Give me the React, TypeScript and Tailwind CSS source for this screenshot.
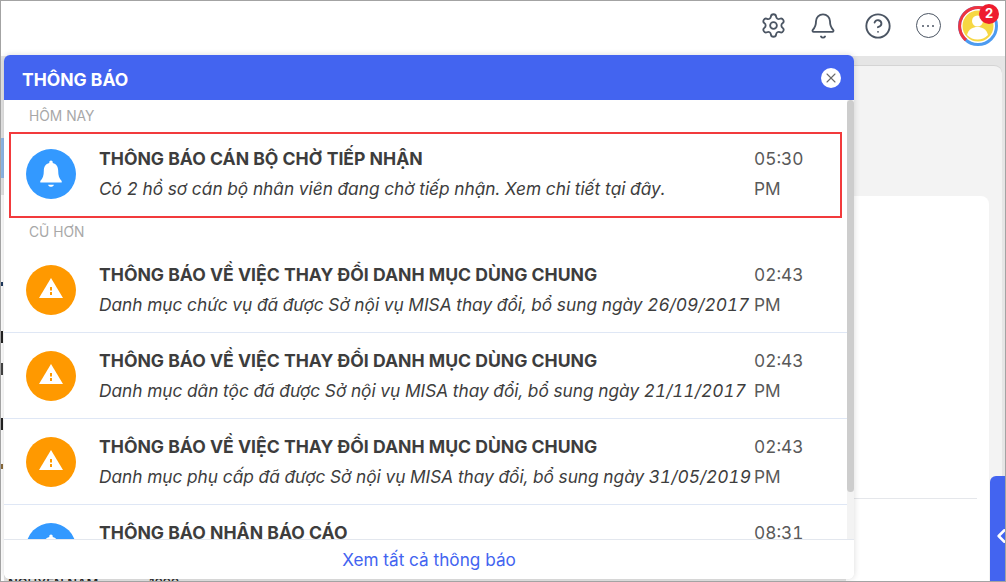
import { Settings, Bell, CircleHelp, X, ChevronLeft } from 'lucide-react';

type Item = { icon: 'bell' | 'warn'; title: string; body: string; time: string; period: string };

const oldItems: Item[] = [
  { icon: 'warn', title: 'THÔNG BÁO VỀ VIỆC THAY ĐỔI DANH MỤC DÙNG CHUNG', body: 'Danh mục chức vụ đã được Sở nội vụ MISA thay đổi, bổ sung ngày 26/09/2017', time: '02:43', period: 'PM' },
  { icon: 'warn', title: 'THÔNG BÁO VỀ VIỆC THAY ĐỔI DANH MỤC DÙNG CHUNG', body: 'Danh mục dân tộc đã được Sở nội vụ MISA thay đổi, bổ sung ngày 21/11/2017', time: '02:43', period: 'PM' },
  { icon: 'warn', title: 'THÔNG BÁO VỀ VIỆC THAY ĐỔI DANH MỤC DÙNG CHUNG', body: 'Danh mục phụ cấp đã được Sở nội vụ MISA thay đổi, bổ sung ngày 31/05/2019', time: '02:43', period: 'PM' },
  { icon: 'bell', title: 'THÔNG BÁO NHẬN BÁO CÁO', body: 'Bạn có báo cáo mới cần xem', time: '08:31', period: 'AM' },
];

function ItemIcon({ icon }: { icon: Item['icon'] }) {
  if (icon === 'bell') {
    return (
      <div className="flex h-[50px] w-[50px] shrink-0 items-center justify-center rounded-full bg-[#3399ff]">
        <svg width="26" height="30" viewBox="0 0 24 28" fill="white">
          <path d="M12 1.5c-.9 0-1.600.7-1.600 1.600v.6C6.900 4.500 5.300 7.300 5.300 10.800c0 4.700-.9 7.400-3.300 9.700v1.500h20v-1.500c-2.400-2.300-3.300-5-3.300-9.700 0-3.500-1.600-6.300-5.100-7.100v-.6c0-.9-.7-1.600-1.600-1.600z" />
          <path d="M9.300 24h5.400c-.3 1.200-1.400 2-2.700 2s-2.400-.8-2.700-2z" />
        </svg>
      </div>
    );
  }
  return (
    <div className="flex h-[50px] w-[50px] shrink-0 items-center justify-center rounded-full bg-[#ff9900] pb-[4px]">
      <svg width="24" height="20" viewBox="0 0 24 20">
        <path d="M12 0 24 20H0z" fill="white" />
        <rect x="11" y="9" width="2" height="3.500" fill="#ff9900" />
        <rect x="11" y="14" width="2" height="3" fill="#ff9900" />
      </svg>
    </div>
  );
}

function Row({ item, className, timeWidth }: { item: Item; className: string; timeWidth: string }) {
  return (
    <div className={`flex items-center ${className}`}>
      <ItemIcon icon={item.icon} />
      <div className="ml-[23px] min-w-0 flex-1">
        <div className="whitespace-nowrap text-[17.6px] font-bold leading-[30px] text-[#3d3d3d]">{item.title}</div>
        <div className="whitespace-nowrap text-[17.3px] italic leading-[30px] tabular-nums text-[#3d3d3d]">{item.body}</div>
      </div>
      <div className={`shrink-0 text-[17.3px] leading-[30px] tabular-nums text-[#595959] ${timeWidth}`}>
        <div>{item.time}</div>
        <div>{item.period}</div>
      </div>
    </div>
  );
}

export default function App() {
  return (
    <div className="relative h-[582px] w-[1006px] overflow-hidden border border-[#a3a3a3] bg-[#e5e5e5] font-['Inter',sans-serif]">
      {/* top bar */}
      <div className="flex h-[55px] items-center justify-end bg-white pb-[6px] pr-[2px] text-[#4b5563]">
        <div className="flex w-[50px] justify-center"><Settings size={27} strokeWidth={1.6} /></div>
        <div className="flex w-[50px] justify-center"><Bell size={28} strokeWidth={1.6} /></div>
        <div className="ml-[5px] flex w-[50px] justify-center"><CircleHelp size={28} strokeWidth={1.6} /></div>
        <div className="flex w-[50px] justify-center">
          <div className="flex h-[25px] w-[25px] items-center justify-center gap-[3px] rounded-full border-[1.6px] border-[#4b5563]">
            <span className="h-[2px] w-[2px] rounded-full bg-[#4b5563]" />
            <span className="h-[2px] w-[2px] rounded-full bg-[#4b5563]" />
            <span className="h-[2px] w-[2px] rounded-full bg-[#4b5563]" />
          </div>
        </div>
        <div className="flex w-[50px] justify-center">
          <div className="relative h-[40px] w-[40px]">
            <svg width="40" height="40" viewBox="0 0 40 40">
              <circle cx="20" cy="20" r="18.500" fill="none" stroke="#4d9bf0" strokeWidth="3" />
              <path d="M8 34A18.500 18.500 0 0 1 26 2.500" fill="none" stroke="#ef3340" strokeWidth="3" />
              <circle cx="20" cy="20" r="15.500" fill="#f6d743" />
              <circle cx="19.500" cy="15" r="5.500" fill="white" />
              <path d="M9 29c1.500-6 6-8 10.500-8s9 2 10.500 8c-3 3-6.500 4.500-10.500 4.500S12 32 9 29z" fill="white" />
            </svg>
            <span className="absolute -right-[1px] -top-[2px] flex h-[20px] w-[20px] items-center justify-center rounded-full bg-[#ee1c2e] text-[13px] font-bold text-white">2</span>
          </div>
        </div>
      </div>

      {/* page behind the panel */}
      <div className="flex h-[525px] pl-[845px] pr-[3px] pt-[9px]">
        <div className="h-full flex-1 rounded-t-[8px] border-t border-[#d4d4d4] bg-[#f3f3f3] pr-[13px] pt-[130px]">
          <div className="h-full rounded-tr-[8px] bg-white">
            <div className="mr-[12px] pt-[302px]">
              <div className="h-px bg-[#e5e7eb]" />
            </div>
          </div>
        </div>
      </div>
      <div className="absolute bottom-0 right-0 flex h-[105px] w-[15px] items-center justify-end rounded-tl-[6px] bg-[#4364f0] pt-[15px] text-white">
        <ChevronLeft size={26} strokeWidth={2.6} className="-mr-[8px]" />
      </div>

      {/* bits of the page showing round the panel */}
      <div className="absolute bottom-0 left-0 top-[194px] w-[3px] bg-white" />
      <div className="absolute left-0 top-[137px] h-[40px] w-[3px] bg-[#8fb8e8]" />
      <div className="absolute left-0 top-[281px] h-[4px] w-[2px] bg-[#1f3a5f]" />
      <div className="absolute left-0 top-[330px] h-[12px] w-[2px] bg-[#222222]" />
      <div className="absolute left-0 top-[362px] h-[12px] w-[2px] bg-[#444444]" />
      <div className="absolute left-0 top-[417px] h-[12px] w-[2px] bg-[#222222]" />
      <div className="absolute left-0 top-[463px] h-[5px] w-[2px] bg-[#8a6a3a]" />
      <div className="absolute left-[7px] top-[574px] flex gap-[51px] whitespace-nowrap text-[13px] font-medium leading-[16px] text-[#222222]">
        <span>NGUYỄN NAM</span>
        <span>1999</span>
      </div>

      {/* notification panel */}
      <div className="absolute left-[3px] top-[54px] flex h-[524px] w-[850px] flex-col overflow-hidden rounded-[6px] bg-white shadow-[0_0_6px_rgba(0,0,0,0.15)]">
        <div className="flex h-[45px] shrink-0 items-center justify-between bg-[#4364f0] pl-[18px] pr-[13px]">
          <span className="pt-[5px] text-[17.5px] font-bold text-white">THÔNG BÁO</span>
          <span className="flex h-[20px] w-[20px] items-center justify-center rounded-full bg-white text-[#6b6b6b]">
            <X size={16} strokeWidth={1.6} />
          </span>
        </div>
        <div className="relative min-h-0 flex-1 overflow-hidden">
          <div className="absolute bottom-0 right-0 top-0 w-[7px] bg-[#f3f3f3]">
            <div className="h-[392px] rounded-[4px] bg-[#cdcdcd]" />
          </div>
          <div className="mr-[7px]">
            <div className="flex h-[32px] items-center pl-[25px] pt-[1px] text-[13.8px] text-[#a8a8a8]">HÔM NAY</div>
            <Row item={{ icon: 'bell', title: 'THÔNG BÁO CÁN BỘ CHỜ TIẾP NHẬN', body: 'Có 2 hồ sơ cán bộ nhân viên đang chờ tiếp nhận. Xem chi tiết tại đây.', time: '05:30', period: 'PM' }} timeWidth="w-[86px]" className="ml-[5px] mr-[5px] h-[86px] border-2 border-[#f23a3c] pb-[2px] pl-[15px]" />
            <div className="flex h-[29px] items-center pl-[25px] text-[13.8px] text-[#a8a8a8]">CŨ HƠN</div>
            {oldItems.map((item, i) => (
              <Row key={i} item={item} timeWidth="w-[91px]" className="h-[86px] border-b border-[#dfe7f5] pl-[22px] pr-[2px]" />
            ))}
          </div>
        </div>
        <div className="flex h-[40px] shrink-0 items-center justify-center border-t border-[#e3e7ee] bg-white text-[17.2px] text-[#4364f0]">Xem tất cả thông báo</div>
      </div>
    </div>
  );
}
